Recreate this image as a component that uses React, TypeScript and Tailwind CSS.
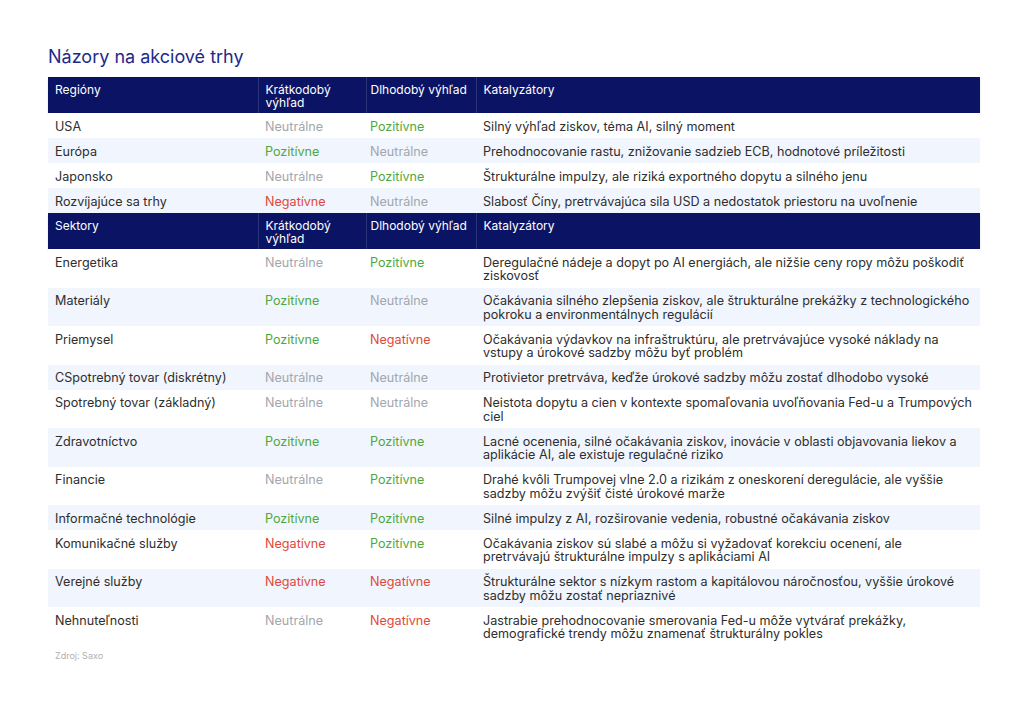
import React from "react";

type Tone = "neu" | "pos" | "neg";

const toneLabel: Record<Tone, string> = {
  neu: "Neutrálne",
  pos: "Pozitívne",
  neg: "Negatívne",
};

const toneClass: Record<Tone, string> = {
  neu: "text-[#a3a6ad]",
  pos: "text-[#4fa83d]",
  neg: "text-[#e0493a]",
};

// text lines are split where the original breaks them
type Row = { name: string; short: Tone; long: Tone; text: string[] };

const regions: Row[] = [
  { name: "USA", short: "neu", long: "pos", text: ["Silný výhľad ziskov, téma AI, silný moment"] },
  { name: "Európa", short: "pos", long: "neu", text: ["Prehodnocovanie rastu, znižovanie sadzieb ECB, hodnotové príležitosti"] },
  { name: "Japonsko", short: "neu", long: "pos", text: ["Štrukturálne impulzy, ale riziká exportného dopytu a silného jenu"] },
  { name: "Rozvíjajúce sa trhy", short: "neg", long: "neu", text: ["Slabosť Číny, pretrvávajúca sila USD a nedostatok priestoru na uvoľnenie"] },
];

const sectors: Row[] = [
  {
    name: "Energetika", short: "neu", long: "pos",
    text: ["Deregulačné nádeje a dopyt po AI energiách, ale nižšie ceny ropy môžu poškodiť", "ziskovosť"],
  },
  {
    name: "Materiály", short: "pos", long: "neu",
    text: ["Očakávania silného zlepšenia ziskov, ale štrukturálne prekážky z technologického", "pokroku a environmentálnych regulácií"],
  },
  {
    name: "Priemysel", short: "pos", long: "neg",
    text: ["Očakávania výdavkov na infraštruktúru, ale pretrvávajúce vysoké náklady na", "vstupy a úrokové sadzby môžu byť problém"],
  },
  {
    name: "CSpotrebný tovar (diskrétny)", short: "neu", long: "neu",
    text: ["Protivietor pretrváva, keďže úrokové sadzby môžu zostať dlhodobo vysoké"],
  },
  {
    name: "Spotrebný tovar (základný)", short: "neu", long: "neu",
    text: ["Neistota dopytu a cien v kontexte spomaľovania uvoľňovania Fed-u a Trumpových", "ciel"],
  },
  {
    name: "Zdravotníctvo", short: "pos", long: "pos",
    text: ["Lacné ocenenia, silné očakávania ziskov, inovácie v oblasti objavovania liekov a", "aplikácie AI, ale existuje regulačné riziko"],
  },
  {
    name: "Financie", short: "neu", long: "pos",
    text: ["Drahé kvôli Trumpovej vlne 2.0 a rizikám z oneskorení deregulácie, ale vyššie", "sadzby môžu zvýšiť čisté úrokové marže"],
  },
  {
    name: "Informačné technológie", short: "pos", long: "pos",
    text: ["Silné impulzy z AI, rozširovanie vedenia, robustné očakávania ziskov"],
  },
  {
    name: "Komunikačné služby", short: "neg", long: "pos",
    text: ["Očakávania ziskov sú slabé a môžu si vyžadovať korekciu ocenení, ale", "pretrvávajú štrukturálne impulzy s aplikáciami AI"],
  },
  {
    name: "Verejné služby", short: "neg", long: "neg",
    text: ["Štrukturálne sektor s nízkym rastom a kapitálovou náročnosťou, vyššie úrokové", "sadzby môžu zostať nepriaznivé"],
  },
  {
    name: "Nehnuteľnosti", short: "neu", long: "neg",
    text: ["Jastrabie prehodnocovanie smerovania Fed-u môže vytvárať prekážky,", "demografické trendy môžu znamenať štrukturálny pokles"],
  },
];

function HeaderRow({ first }: { first: string }) {
  const th = "text-left align-top font-normal text-white text-[12px] leading-[13px] pt-[6px] pb-[4px] whitespace-nowrap";
  return (
    <tr className="bg-[#0b1464] shadow-[0_2px_1px_rgba(0,0,0,0.25)]">
      <th className={`${th} px-[7px]`}>{first}</th>
      <th className={`${th} px-[7px] border-l border-[#2a3378]`}>
        Krátkodobý
        <br />
        výhľad
      </th>
      <th className={`${th} px-[4px] border-l border-[#2a3378]`}>Dlhodobý výhľad</th>
      <th className={`${th} px-[7px] border-l border-[#2a3378]`}>Katalyzátory</th>
    </tr>
  );
}

function BodyRows({ rows }: { rows: Row[] }) {
  const td = "align-top text-[12.6px] leading-[13.5px] pt-[6.5px] pb-[5px] whitespace-nowrap";
  return (
    <>
      {rows.map((r, i) => (
        <tr key={r.name} className={i % 2 === 1 ? "bg-[#f1f5fd]" : "bg-white"}>
          <td className={`${td} px-[7px] text-[#2e2e2e]`}>{r.name}</td>
          <td className={`${td} px-[7px] ${toneClass[r.short]}`}>{toneLabel[r.short]}</td>
          <td className={`${td} px-[4px] ${toneClass[r.long]}`}>{toneLabel[r.long]}</td>
          <td className={`${td} px-[7px] text-[#2e2e2e]`}>
            {r.text.map((line) => (
              <div key={line}>{line}</div>
            ))}
          </td>
        </tr>
      ))}
    </>
  );
}

export default function App() {
  return (
    <div className="w-[1024px] h-[710px] bg-white font-['Inter',sans-serif] px-[48px] pt-[46px]">
      <h1 className="text-[18px] leading-[22px] text-[#1d2a8c] font-normal mb-[9px]">
        Názory na akciové trhy
      </h1>
      <table className="w-[932px] border-collapse table-fixed">
        <colgroup>
          <col className="w-[210px]" />
          <col className="w-[108px]" />
          <col className="w-[110px]" />
          <col />
        </colgroup>
        <tbody>
          <HeaderRow first="Regióny" />
          <BodyRows rows={regions} />
          <HeaderRow first="Sektory" />
          <BodyRows rows={sectors} />
        </tbody>
      </table>
      <p className="mt-[4px] pl-[7px] text-[9px] leading-[12px] text-[#b0b0b0]">Zdroj: Saxo</p>
    </div>
  );
}
